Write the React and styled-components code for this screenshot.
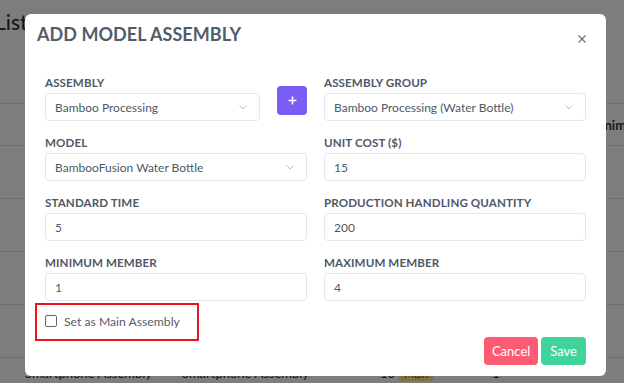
import React from "react";
import styled, { createGlobalStyle } from "styled-components";

const Global = createGlobalStyle`
  html, body { margin: 0; padding: 0; background: #ffffff; overflow: hidden; }
  body { font-family: Lato, "Open Sans", sans-serif; width: 624px; height: 383px; }
  * { box-sizing: border-box; }
`;

const Page = styled.div`
  width: 624px;
  height: 383px;
  position: relative;
  overflow: hidden;
  background: #ffffff;
`;

const PageTitle = styled.h1`
  margin: 0;
  padding: 9px 0 0 0;
  margin-left: -5px;
  font-size: 21px;
  line-height: 26px;
  font-weight: 500;
  color: #2d3340;
  height: 103px;
`;

const Table = styled.div`
  display: flex;
  flex-direction: column;
`;

const Row = styled.div`
  display: grid;
  grid-template-columns: 25px 157px 198px 112px 97px 1fr;
  align-items: ${(p) => (p.$top ? "start" : "center")};
  height: ${(p) => (p.$head ? 42 : 53)}px;
  border-top: 1px solid #dcdfe4;
  font-size: 13px;
  font-weight: ${(p) => (p.$head ? 700 : 400)};
  color: #2d3340;
  padding-top: ${(p) => (p.$top ? 7 : 0)}px;
`;

const Cell = styled.div`
  white-space: nowrap;
  display: flex;
  align-items: center;
  gap: 4px;
`;

const Badge = styled.span`
  background: #fde68a;
  color: #92400e;
  font-size: 11px;
  padding: 1px 5px;
  border-radius: 3px;
`;

const Overlay = styled.div`
  position: absolute;
  inset: 0;
  background: rgba(0, 0, 0, 0.51);
`;

const Modal = styled.div`
  position: absolute;
  left: 25px;
  top: 14px;
  width: 581px;
  height: 362px;
  background: #ffffff;
  border-radius: 6px;
  display: flex;
  flex-direction: column;
`;

const Header = styled.div`
  display: flex;
  justify-content: space-between;
  align-items: flex-start;
  padding: 8px 20px 0 12px;
  height: 41px;
`;

const Title = styled.h2`
  margin: 0;
  font-size: 18px;
  line-height: 24px;
  font-weight: 700;
  color: #535c69;
  letter-spacing: 0.05px;
`;

const Close = styled.button`
  border: 0;
  background: none;
  padding: 0;
  width: 8px;
  height: 8px;
  display: flex;
  margin-top: 13px;
  color: #6b7280;
`;

const Body = styled.div`
  padding: 20px 20px 0 20px;
  display: grid;
  grid-template-columns: 1fr 1fr;
  column-gap: 17px;
  row-gap: 14px;
`;

const Field = styled.div`
  display: flex;
  flex-direction: column;
  gap: 2px;
  min-width: 0;
  flex: ${(p) => (p.$grow ? 1 : "initial")};
`;

const FieldWithAction = styled.div`
  display: flex;
  align-items: center;
  gap: 17px;
`;

const Label = styled.label`
  font-size: 11.6px;
  line-height: 16px;
  font-weight: 700;
  color: #4f5866;
  letter-spacing: 0.1px;
  white-space: nowrap;
`;

const Box = styled.div`
  height: 28px;
  border: 1px solid #e3e6ee;
  border-radius: 4px;
  display: flex;
  align-items: center;
  justify-content: space-between;
  padding: 0 12px 0 9px;
  font-size: 12px;
  color: #4f5866;
  background: #fff;
`;

const AddButton = styled.button`
  width: 30px;
  height: 29px;
  flex: none;
  border: 0;
  border-radius: 4px;
  background: #7b5cf5;
  display: flex;
  align-items: center;
  justify-content: center;
  padding: 0;
  margin-top: 4px;
`;

const CheckRow = styled.div`
  position: relative;
  margin: 8px 0 0 20px;
  height: 24px;
  display: flex;
  align-items: center;
  gap: 7px;
  font-size: 12.2px;
  color: #555d6a;
`;

const CheckBox = styled.span`
  width: 12px;
  height: 12px;
  border: 1.5px solid #5f6672;
  border-radius: 2px;
  display: inline-block;
`;

const Highlight = styled.div`
  position: absolute;
  left: -10px;
  top: -6px;
  width: 164px;
  height: 38px;
  border: 2px solid #e8141e;
  pointer-events: none;
`;

const Footer = styled.div`
  display: flex;
  justify-content: flex-end;
  gap: 3px;
  padding: 4px 20px 0 0;
`;

const Btn = styled.button`
  height: 28px;
  border: 0;
  border-radius: 4px;
  padding: 0 ${(p) => p.$px}px;
  font-family: inherit;
  font-size: 13px;
  color: #ffffff;
  background: ${(p) => p.$bg};
`;

const Chevron = () => (
  <svg width="8" height="5" viewBox="0 0 8 5" fill="none">
    <path d="M0.5 0.5 L4 4 L7.5 0.5" stroke="#b6bbc4" strokeWidth="1" />
  </svg>
);

const SelectBox = ({ value }) => (
  <Box>
    <span>{value}</span>
    <Chevron />
  </Box>
);

export default function App() {
  return (
    <>
      <Global />
      <Page>
        <PageTitle>List</PageTitle>
        <Table>
          <Row $head>
            <Cell />
            <Cell />
            <Cell />
            <Cell />
            <Cell />
            <Cell>Minimum</Cell>
          </Row>
          <Row />
          <Row />
          <Row />
          <Row />
          <Row $top>
            <Cell />
            <Cell>Smartphone Assembly</Cell>
            <Cell>Smartphone Assembly</Cell>
            <Cell>
              10 <Badge>Main</Badge>
            </Cell>
            <Cell>1</Cell>
            <Cell />
          </Row>
        </Table>
        <Overlay />
        <Modal>
          <Header>
            <Title>ADD MODEL ASSEMBLY</Title>
            <Close aria-label="Close">
              <svg width="8" height="8" viewBox="0 0 8 8">
                <path d="M0.5 0.5 L7.5 7.5 M7.5 0.5 L0.5 7.5" stroke="#6b7280" strokeWidth="1.2" />
              </svg>
            </Close>
          </Header>
          <Body>
            <FieldWithAction>
              <Field $grow>
                <Label>ASSEMBLY</Label>
                <SelectBox value="Bamboo Processing" />
              </Field>
              <AddButton aria-label="Add">
                <svg width="9" height="9" viewBox="0 0 9 9">
                  <path d="M4.5 0.5 V8.5 M0.5 4.5 H8.5" stroke="#ffffff" strokeWidth="1.6" />
                </svg>
              </AddButton>
            </FieldWithAction>
            <Field>
              <Label>ASSEMBLY GROUP</Label>
              <SelectBox value="Bamboo Processing (Water Bottle)" />
            </Field>
            <Field>
              <Label>MODEL</Label>
              <SelectBox value="BambooFusion Water Bottle" />
            </Field>
            <Field>
              <Label>UNIT COST ($)</Label>
              <Box>15</Box>
            </Field>
            <Field>
              <Label>STANDARD TIME</Label>
              <Box>5</Box>
            </Field>
            <Field>
              <Label>PRODUCTION HANDLING QUANTITY</Label>
              <Box>200</Box>
            </Field>
            <Field>
              <Label>MINIMUM MEMBER</Label>
              <Box>1</Box>
            </Field>
            <Field>
              <Label>MAXIMUM MEMBER</Label>
              <Box>4</Box>
            </Field>
          </Body>
          <CheckRow>
            <CheckBox />
            <span>Set as Main Assembly</span>
            <Highlight />
          </CheckRow>
          <Footer>
            <Btn $bg="#fd5b74" $px={8}>Cancel</Btn>
            <Btn $bg="#40d49c" $px={9}>Save</Btn>
          </Footer>
        </Modal>
      </Page>
    </>
  );
}
